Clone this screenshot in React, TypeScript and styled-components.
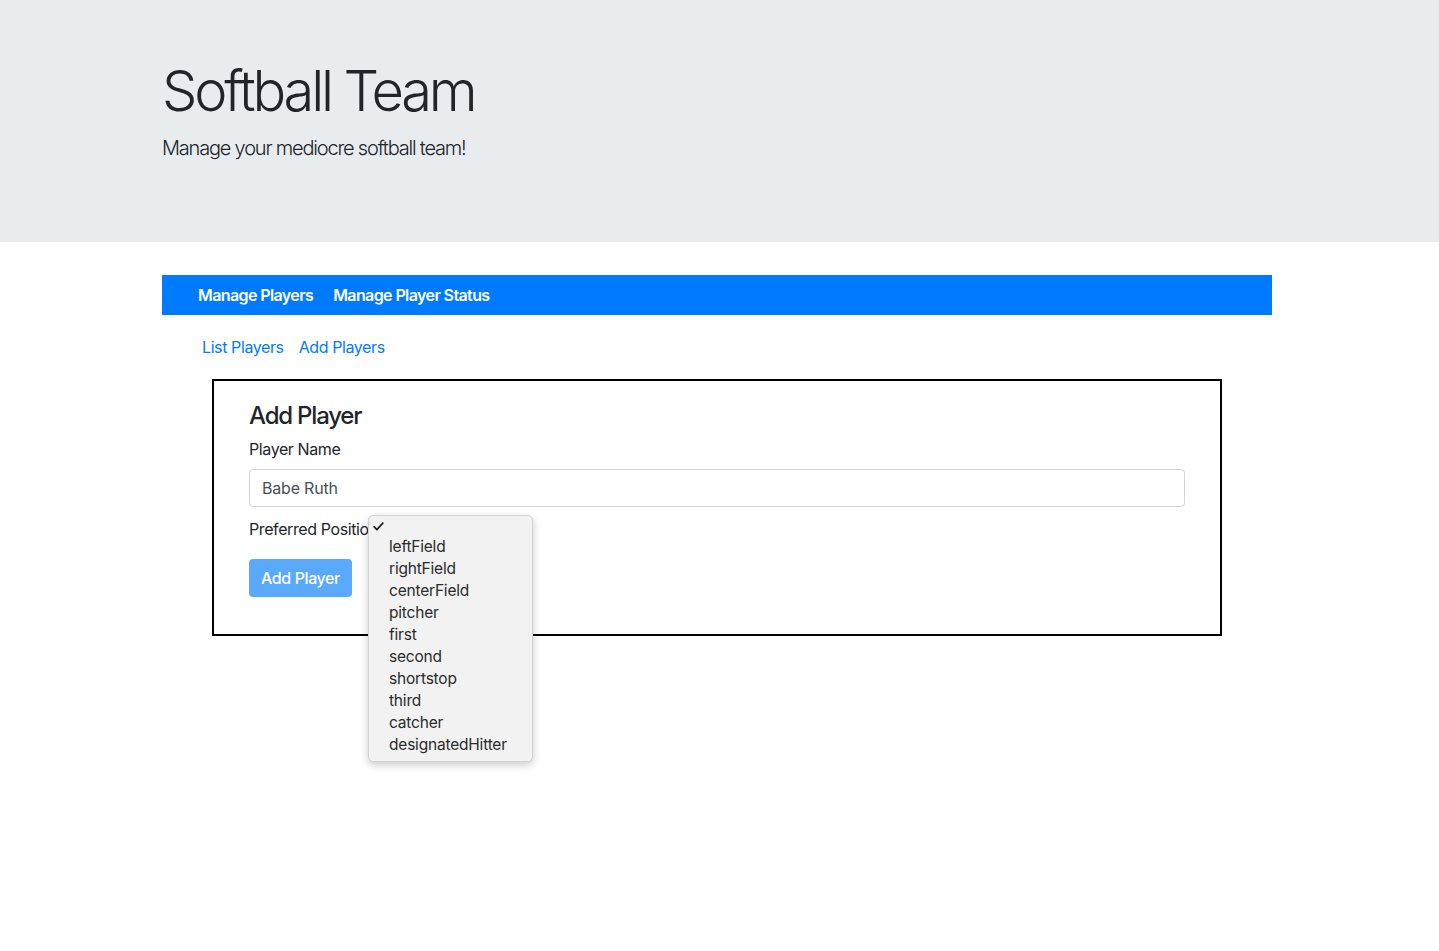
import React from "react";
import styled, { createGlobalStyle } from "styled-components";

const Global = createGlobalStyle`
  html, body { margin: 0; padding: 0; background: #fff; }
  body {
    font-family: "Inter", "Liberation Sans", sans-serif;
    color: #212529;
    font-size: 16px;
    line-height: 1.5;
  }
  * { box-sizing: border-box; }
`;

const Page = styled.div`
  min-height: 951px;
`;

const Jumbotron = styled.header`
  background: #e9ecef;
  height: 242px;
  padding: 58px 0 0 162px;
  margin-bottom: 33px;
`;

const Title = styled.h1`
  margin: 0 0 8px;
  font-size: 56px;
  font-weight: 300;
  line-height: 1.2;
  letter-spacing: -3.2px;
  color: #212529;
`;

const Lead = styled.p`
  margin: 0;
  font-size: 20px;
  font-weight: 300;
  line-height: 30px;
  letter-spacing: -1.2px;
  color: #212529;
`;

const Container = styled.main`
  width: 1110px;
  margin-left: 162px;
`;

const NavBar = styled.nav`
  background: #007bff;
  height: 40px;
  display: flex;
  align-items: center;
  gap: 20px;
  padding-left: 36px;
`;

const NavLink = styled.a`
  color: #fff;
  font-weight: 600;
  font-size: 16px;
  letter-spacing: -0.6px;
  text-decoration: none;
`;

const SubNav = styled.div`
  display: flex;
  gap: 15px;
  padding-left: 40px;
  margin: 20px 0;
  line-height: 24px;
`;

const SubLink = styled.a`
  color: #007bff;
  font-size: 16px;
  letter-spacing: -0.4px;
  text-decoration: none;
`;

const Card = styled.section`
  margin: 0 50px;
  border: 2px solid #000;
  padding: 20px 35px 37px;
  position: relative;
`;

const Heading = styled.h4`
  margin: 0 0 7px;
  font-size: 24px;
  font-weight: 500;
  line-height: 29px;
  letter-spacing: -1.2px;
`;

const Label = styled.label<{ $mb?: number }>`
  display: block;
  font-size: 16px;
  line-height: 24px;
  letter-spacing: -0.4px;
  margin-bottom: ${(p) => p.$mb ?? 8}px;
`;

const Input = styled.input`
  display: block;
  width: 100%;
  height: 38px;
  padding: 0 12px;
  border: 1px solid #ced4da;
  border-radius: 4px;
  font-family: inherit;
  font-size: 16px;
  letter-spacing: -0.2px;
  color: #495057;
  margin-bottom: 10px;
  outline: none;
`;

const Button = styled.button`
  display: block;
  height: 38px;
  padding: 0 12px;
  border: none;
  border-radius: 4px;
  background: #59a9ff;
  color: #fff;
  font-family: inherit;
  font-size: 16px;
  font-weight: 500;
  letter-spacing: -0.4px;
`;

const Popup = styled.ul`
  position: absolute;
  left: 154px;
  top: 134px;
  width: 165px;
  margin: 0;
  padding: 2px 0 5px;
  list-style: none;
  background: #f2f2f2;
  border: 1px solid #d2d2d2;
  border-radius: 5px;
  box-shadow: 0 3px 8px rgba(0, 0, 0, 0.2);
  z-index: 10;
`;

const Option = styled.li<{ $first?: boolean }>`
  position: relative;
  height: ${(p) => (p.$first ? 18 : 22)}px;
  line-height: ${(p) => (p.$first ? 18 : 22)}px;
  padding-left: 20px;
  font-size: 15.5px;
  letter-spacing: -0.2px;
  color: #2b2b2b;
`;

const Check = styled.svg`
  position: absolute;
  left: 4px;
  top: 4px;
`;

const positions = [
  "leftField",
  "rightField",
  "centerField",
  "pitcher",
  "first",
  "second",
  "shortstop",
  "third",
  "catcher",
  "designatedHitter",
];

export default function App() {
  return (
    <Page>
      <Global />
      <Jumbotron>
        <Title>Softball Team</Title>
        <Lead>Manage your mediocre softball team!</Lead>
      </Jumbotron>
      <Container>
        <NavBar>
          <NavLink href="#">Manage Players</NavLink>
          <NavLink href="#">Manage Player Status</NavLink>
        </NavBar>
        <SubNav>
          <SubLink href="#">List Players</SubLink>
          <SubLink href="#">Add Players</SubLink>
        </SubNav>
        <Card>
          <Heading>Add Player</Heading>
          <Label>Player Name</Label>
          <Input defaultValue="Babe Ruth" />
          <Label $mb={18}>Preferred Position</Label>
          <Button>Add Player</Button>
          <Popup>
            <Option $first>
              <Check width="11" height="9" viewBox="0 0 11 9" aria-hidden="true">
                <path
                  d="M1.2 4.8 L3.9 7.6 L9.8 1.2"
                  fill="none"
                  stroke="#222"
                  strokeWidth="1.8"
                  strokeLinecap="round"
                  strokeLinejoin="round"
                />
              </Check>
              &nbsp;
            </Option>
            {positions.map((p) => (
              <Option key={p}>{p}</Option>
            ))}
          </Popup>
        </Card>
      </Container>
    </Page>
  );
}
